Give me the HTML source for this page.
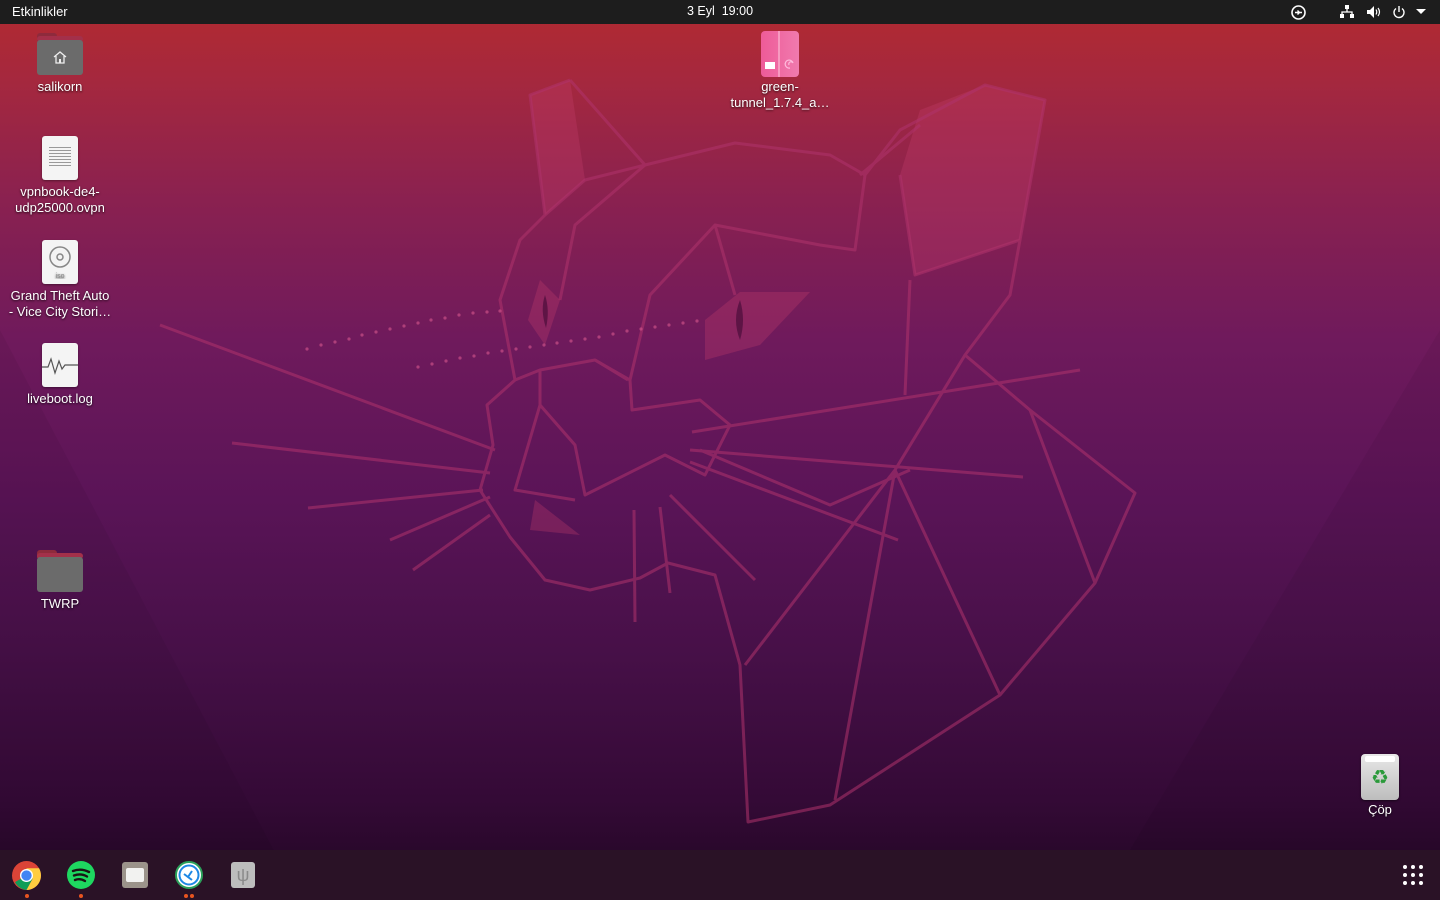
<!DOCTYPE html>
<html><head><meta charset="utf-8">
<style>
*{margin:0;padding:0;box-sizing:border-box}
html,body{width:1440px;height:900px;overflow:hidden}
body{font-family:"Liberation Sans","DejaVu Sans",sans-serif;position:relative;
background:linear-gradient(180deg,#b32a2f 0px,#a5283e 80px,#8a2150 200px,#6f1a5c 340px,#5a1457 500px,#471048 650px,#340a36 800px,#2a082c 850px)}
#top{position:absolute;left:0;top:0;width:1440px;height:24px;background:#1d1d1d;color:#fff;font-size:13px}
#top .l{position:absolute;left:12px;top:4px}
#top .c{position:absolute;left:687px;top:4px;font-size:12.5px}
#dock{position:absolute;left:0;top:850px;width:1440px;height:50px;background:#2a1226}
.ic{position:absolute;width:120px;text-align:center;color:#fff;font-size:13px;line-height:16px;text-shadow:0 1px 2px rgba(0,0,0,.8)}
.ic .g{margin:0 auto 4px;position:relative}
.dot{position:absolute;width:4px;height:4px;border-radius:50%;background:#e95420;top:894px}
svg.cat{position:absolute;left:0;top:0}
</style></head><body>
<svg class="cat" width="1440" height="900" viewBox="0 0 1440 900">
<polygon points="0,330 300,900 0,900" fill="#000" opacity=".05"/>
<polygon points="1440,330 1100,900 1440,900" fill="#000" opacity=".05"/>
<g fill="#c8406e" opacity=".3">
<polygon points="530,95 570,80 585,180 545,215"/>
<polygon points="920,110 985,85 1045,100 1020,240 915,275 900,175"/>
<polygon points="540,280 560,300 545,345 528,320"/>
<polygon points="705,320 740,292 810,292 760,345 705,360"/>
<polygon points="535,500 580,535 530,530"/>
</g>
<g fill="none" stroke="#b0336c" stroke-width="3" opacity=".55" stroke-linejoin="round">
<polyline points="570,80 645,165 735,143 830,155 865,175 900,130 985,85 1045,100 1020,240 1010,295 965,355 1030,410 1135,493 1095,583 1000,695 830,805 748,822 740,665 715,575 668,563 640,578 590,590 545,580 510,537 480,490 493,445 487,405 515,380 500,300 520,240 545,215 530,95 570,80"/>
<polyline points="545,215 585,180 645,165 575,225 560,300"/>
<polyline points="865,175 855,250 820,245 715,225 650,295 630,380 595,360 540,370 515,380"/>
<polyline points="900,175 915,275 1020,240"/>
<polyline points="715,225 735,295"/>
<polyline points="630,380 632,410 700,400 730,425 705,475 665,455 585,495 575,445 540,405 540,370"/>
<polyline points="540,405 515,490 575,500"/>
<polyline points="595,360 628,380"/>
<polyline points="910,280 905,395"/>
<polyline points="965,355 895,470 745,665"/>
<polyline points="1030,410 1095,583"/>
<polyline points="895,470 1000,695"/>
<polyline points="895,470 835,800"/>
<polyline points="910,470 830,505 700,450"/>
<polyline points="160,325 495,450"/>
<polyline points="232,443 490,473"/>
<polyline points="308,508 483,490"/>
<polyline points="390,540 490,497"/>
<polyline points="413,570 490,515"/>
<polyline points="692,432 1080,370"/>
<polyline points="690,450 1023,477"/>
<polyline points="690,462 898,540"/>
<polyline points="670,495 755,580"/>
<polyline points="660,507 670,593"/>
<polyline points="634,510 635,622"/>
<polyline points="860,175 920,125"/>
</g>
<g fill="#d8588e" opacity=".6">
<circle cx="307" cy="349" r="1.6"/><circle cx="321" cy="345" r="1.6"/><circle cx="335" cy="342" r="1.6"/><circle cx="349" cy="339" r="1.6"/><circle cx="362" cy="335" r="1.6"/><circle cx="376" cy="332" r="1.6"/><circle cx="390" cy="329" r="1.6"/><circle cx="404" cy="326" r="1.6"/><circle cx="418" cy="323" r="1.6"/><circle cx="431" cy="320" r="1.6"/><circle cx="445" cy="318" r="1.6"/><circle cx="459" cy="315" r="1.6"/><circle cx="473" cy="313" r="1.6"/><circle cx="487" cy="312" r="1.6"/><circle cx="500" cy="311" r="1.6"/>
<circle cx="418" cy="367" r="1.6"/><circle cx="432" cy="364" r="1.6"/><circle cx="446" cy="361" r="1.6"/><circle cx="460" cy="358" r="1.6"/><circle cx="474" cy="356" r="1.6"/><circle cx="488" cy="353" r="1.6"/><circle cx="502" cy="351" r="1.6"/><circle cx="516" cy="349" r="1.6"/><circle cx="530" cy="347" r="1.6"/><circle cx="544" cy="345" r="1.6"/><circle cx="557" cy="343" r="1.6"/><circle cx="571" cy="341" r="1.6"/><circle cx="585" cy="339" r="1.6"/><circle cx="599" cy="337" r="1.6"/><circle cx="613" cy="334" r="1.6"/><circle cx="627" cy="331" r="1.6"/><circle cx="641" cy="329" r="1.6"/><circle cx="655" cy="327" r="1.6"/><circle cx="669" cy="325" r="1.6"/><circle cx="683" cy="323" r="1.6"/><circle cx="697" cy="321" r="1.6"/>
</g>
<path d="M740 300 Q732 320 740 340 Q746 320 740 300Z" fill="#4a0d3a" opacity=".7"/>
<path d="M545 295 Q540 310 546 328 Q550 310 545 295Z" fill="#4a0d3a" opacity=".7"/>
</svg>

<div id="top"><span class="l">Etkinlikler</span><span class="c">3 Eyl&nbsp; 19:00</span>
<svg style="position:absolute;left:1290px;top:4px" width="17" height="17" viewBox="0 0 17 17"><circle cx="8.5" cy="8.5" r="6.5" fill="none" stroke="#fff" stroke-width="1.6"/><path d="M5 8.5h4M7.5 6.5l2 2-2 2M12 8.5H8" stroke="#fff" stroke-width="1.4" fill="none"/></svg>
<svg style="position:absolute;left:1340px;top:5px" width="14" height="13" viewBox="0 0 14 13"><rect x="5" y="0" width="4" height="4" fill="#fff"/><rect x="0" y="9" width="4" height="4" fill="#fff"/><rect x="10" y="9" width="4" height="4" fill="#fff"/><path d="M7 4v3M2 9V7h10v2" stroke="#fff" stroke-width="1.3" fill="none"/></svg>
<svg style="position:absolute;left:1366px;top:5px" width="15" height="14" viewBox="0 0 15 14"><path d="M1 5h3l4-4v12l-4-4H1z" fill="#fff"/><path d="M10 4.5q1.5 2.5 0 5M12 3q3 4 0 8" stroke="#fff" stroke-width="1.2" fill="none"/></svg>
<svg style="position:absolute;left:1392px;top:5px" width="14" height="14" viewBox="0 0 14 14"><path d="M4 3.5A5 5 0 1 0 10 3.5" stroke="#fff" stroke-width="1.4" fill="none"/><path d="M7 1v6" stroke="#fff" stroke-width="1.4"/></svg>
<svg style="position:absolute;left:1416px;top:9px" width="10" height="6"><path d="M0 0h10L5 5z" fill="#fff"/></svg>
</div>

<div class="ic" style="left:0;top:33px"><div class="g" style="width:46px;height:42px">
<div style="position:absolute;left:0;top:0;width:20px;height:8px;background:#8e2a3c;border-radius:3px 3px 0 0"></div>
<div style="position:absolute;left:0;top:3px;width:46px;height:6px;background:#a3304a;border-radius:3px"></div>
<div style="position:absolute;left:0;top:7px;width:46px;height:35px;background:#6b6b6b;border-radius:3px"></div>
<svg style="position:absolute;left:16px;top:18px" width="14" height="13"><path d="M1 6L7 1l6 5M3 5v7h8V5" stroke="#eee" stroke-width="1.3" fill="none"/><rect x="6" y="8" width="2" height="4" fill="#eee"/></svg>
</div>salikorn</div>

<div class="ic" style="left:0;top:136px"><div class="g" style="width:36px;height:44px;background:#f4f4f4;border-radius:3px;box-shadow:0 1px 2px rgba(0,0,0,.4)">
<div style="position:absolute;left:7px;top:11px;width:22px;height:20px;background:repeating-linear-gradient(#999 0 1px,transparent 1px 3px)"></div></div>vpnbook-de4-<br>udp25000.ovpn</div>

<div class="ic" style="left:0;top:240px"><div class="g" style="width:36px;height:44px;background:#f4f4f4;border-radius:3px;box-shadow:0 1px 2px rgba(0,0,0,.4)">
<svg style="position:absolute;left:6px;top:5px" width="24" height="34"><circle cx="12" cy="12" r="10" fill="none" stroke="#888" stroke-width="1.5"/><circle cx="12" cy="12" r="3" fill="none" stroke="#888" stroke-width="1.5"/><text x="12" y="33" font-size="7" fill="#888" text-anchor="middle" font-family="Liberation Sans">iso</text></svg></div>Grand Theft Auto<br>- Vice City Stori…</div>

<div class="ic" style="left:0;top:343px"><div class="g" style="width:36px;height:44px;background:#f4f4f4;border-radius:3px;box-shadow:0 1px 2px rgba(0,0,0,.4)">
<svg style="position:absolute;left:0;top:10px" width="36" height="24"><path d="M0 14h6l3-8 4 14 4-12 3 8 3-4h13" stroke="#555" stroke-width="1.2" fill="none"/></svg></div>liveboot.log</div>

<div class="ic" style="left:0;top:550px"><div class="g" style="width:46px;height:42px">
<div style="position:absolute;left:0;top:0;width:20px;height:8px;background:#8e2a3c;border-radius:3px 3px 0 0"></div>
<div style="position:absolute;left:0;top:3px;width:46px;height:6px;background:#a3304a;border-radius:3px"></div>
<div style="position:absolute;left:0;top:7px;width:46px;height:35px;background:#6b6b6b;border-radius:3px"></div></div>TWRP</div>

<div class="ic" style="left:720px;top:31px"><div class="g" style="width:38px;height:46px;background:linear-gradient(90deg,#ee5b98,#f07aae);border-radius:4px;margin-bottom:2px">
<div style="position:absolute;left:17px;top:0;width:2px;height:46px;background:#f79ac0"></div>
<div style="position:absolute;left:4px;top:31px;width:10px;height:7px;background:#fff"></div>
<svg style="position:absolute;left:23px;top:27px" width="12" height="12"><path d="M6 10A4 4 0 1 1 9 5 2 2 0 1 0 5 7" stroke="#fbd" stroke-width="1.2" fill="none"/></svg></div>green-<br>tunnel_1.7.4_a…</div>

<div class="ic" style="left:1320px;top:754px"><div class="g" style="width:38px;height:46px;background:linear-gradient(#e8e8e8,#bdbdbd);border-radius:4px;box-shadow:0 1px 2px rgba(0,0,0,.5);margin-bottom:2px">
<div style="position:absolute;left:4px;top:2px;width:30px;height:6px;background:#fff;border-radius:2px"></div>
<div style="position:absolute;left:0;top:15px;width:38px;text-align:center;color:#2a9a3a;font-size:20px;text-shadow:none;font-family:'DejaVu Sans'">♻</div></div>Çöp</div>

<div id="dock">
<svg style="position:absolute;left:12px;top:11px" width="29" height="29" viewBox="0 0 28 28"><circle cx="14" cy="14" r="14" fill="#db4437"/><path d="M14 14L2.9 20.4A14 14 0 0 0 14 28h0l6-11z" fill="#0f9d58"/><path d="M14 14l6 3-6 11A14 14 0 0 0 26.1 7H14z" fill="#ffcd40"/><circle cx="14" cy="14" r="6.3" fill="#fff"/><circle cx="14" cy="14" r="5" fill="#4285f4"/></svg>
<svg style="position:absolute;left:67px;top:11px" width="28" height="28"><circle cx="14" cy="14" r="14" fill="#1ed760"/><path d="M6 10q8-3 16 1M7 14.5q7-2.5 13 1M8 19q5-2 10 1" stroke="#191414" stroke-width="2.4" fill="none" stroke-linecap="round"/></svg>
<div style="position:absolute;left:122px;top:12px;width:26px;height:26px;background:#9b938a;border-radius:3px"><div style="position:absolute;left:4px;top:6px;width:18px;height:14px;background:#f2f2f0;border-radius:2px"></div></div>
<svg style="position:absolute;left:175px;top:11px" width="28" height="28"><circle cx="14" cy="14" r="13" fill="#fff" stroke="#2aa05a" stroke-width="2"/><circle cx="14" cy="14" r="9.5" fill="none" stroke="#1e88e5" stroke-width="2"/><path d="M9 13l4 3m4-6l-4 6 4 3" stroke="#1e88e5" stroke-width="2" fill="none"/></svg>
<div style="position:absolute;left:231px;top:12px;width:24px;height:26px;background:#bdbdbd;border-radius:3px;color:#8a8a8a;text-align:center;font-size:18px;line-height:26px">ψ</div>
<svg style="position:absolute;left:1402px;top:14px" width="22" height="22"><g fill="#fff"><circle cx="3" cy="3" r="2"/><circle cx="11" cy="3" r="2"/><circle cx="19" cy="3" r="2"/><circle cx="3" cy="11" r="2"/><circle cx="11" cy="11" r="2"/><circle cx="19" cy="11" r="2"/><circle cx="3" cy="19" r="2"/><circle cx="11" cy="19" r="2"/><circle cx="19" cy="19" r="2"/></g></svg>
</div>
<div class="dot" style="left:25px"></div><div class="dot" style="left:79px"></div><div class="dot" style="left:184px"></div><div class="dot" style="left:190px"></div>
</body></html>
